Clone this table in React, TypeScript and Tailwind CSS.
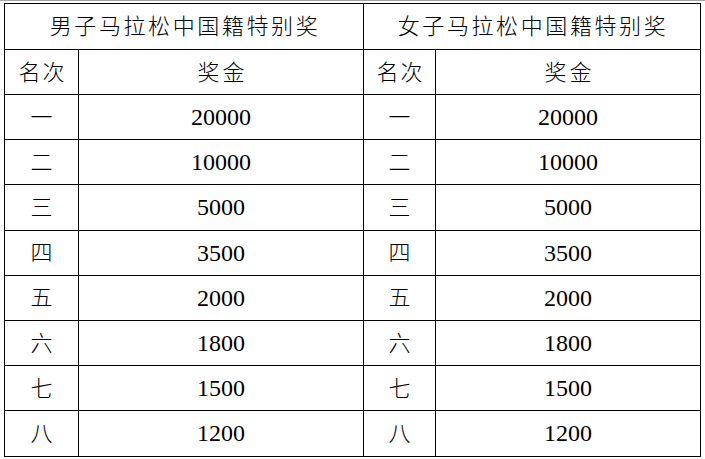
import React from 'react';

const ranks = ['一', '二', '三', '四', '五', '六', '七', '八'];
const prizes = ['20000', '10000', '5000', '3500', '2000', '1800', '1500', '1200'];

const cjk = { fontFamily: '"Liberation Serif", "Noto Sans CJK SC", serif' };

const App: React.FC = () => {
    return (
        <div className="w-[705px] h-[459px] bg-white overflow-hidden text-black" style={cjk}>
            {/* thin grey rule along the top edge */}
            <div className="h-[1px] bg-[#a3a3a3]"></div>
            <div className="mt-[2px] ml-[4px] w-[697px] border-l border-t border-black grid grid-cols-[74px_285px_72px_265px]">
                {/* title row */}
                <div className="col-span-2 h-[46px] border-r border-b border-black flex items-center justify-center text-[22px] tracking-[2.6px] pl-[2px] font-light">
                    男子马拉松中国籍特别奖
                </div>
                <div className="col-span-2 h-[46px] border-r border-b border-black flex items-center justify-center text-[22px] tracking-[2.6px] pl-[2px] font-light">
                    女子马拉松中国籍特别奖
                </div>

                {/* column heads */}
                {[0, 1].map((k) => (
                    <React.Fragment key={k}>
                        <div className="h-[45px] border-r border-b border-black flex items-center justify-center text-[22px] tracking-[2px] pl-[2px] font-light">
                            名次
                        </div>
                        <div className="h-[45px] border-r border-b border-black flex items-center justify-center text-[22px] tracking-[3px] pl-[3px] font-light">
                            奖金
                        </div>
                    </React.Fragment>
                ))}

                {ranks.map((r, i) => (
                    <React.Fragment key={r}>
                        {[0, 1].map((k) => (
                            <React.Fragment key={k}>
                                <div className="h-[45.2px] border-r border-b border-black flex items-center justify-center text-[22px] font-light">
                                    {r}
                                </div>
                                <div className="h-[45.2px] border-r border-b border-black flex items-center justify-center text-[24px]">
                                    {prizes[i]}
                                </div>
                            </React.Fragment>
                        ))}
                    </React.Fragment>
                ))}
            </div>
        </div>
    );
};

export default App;
